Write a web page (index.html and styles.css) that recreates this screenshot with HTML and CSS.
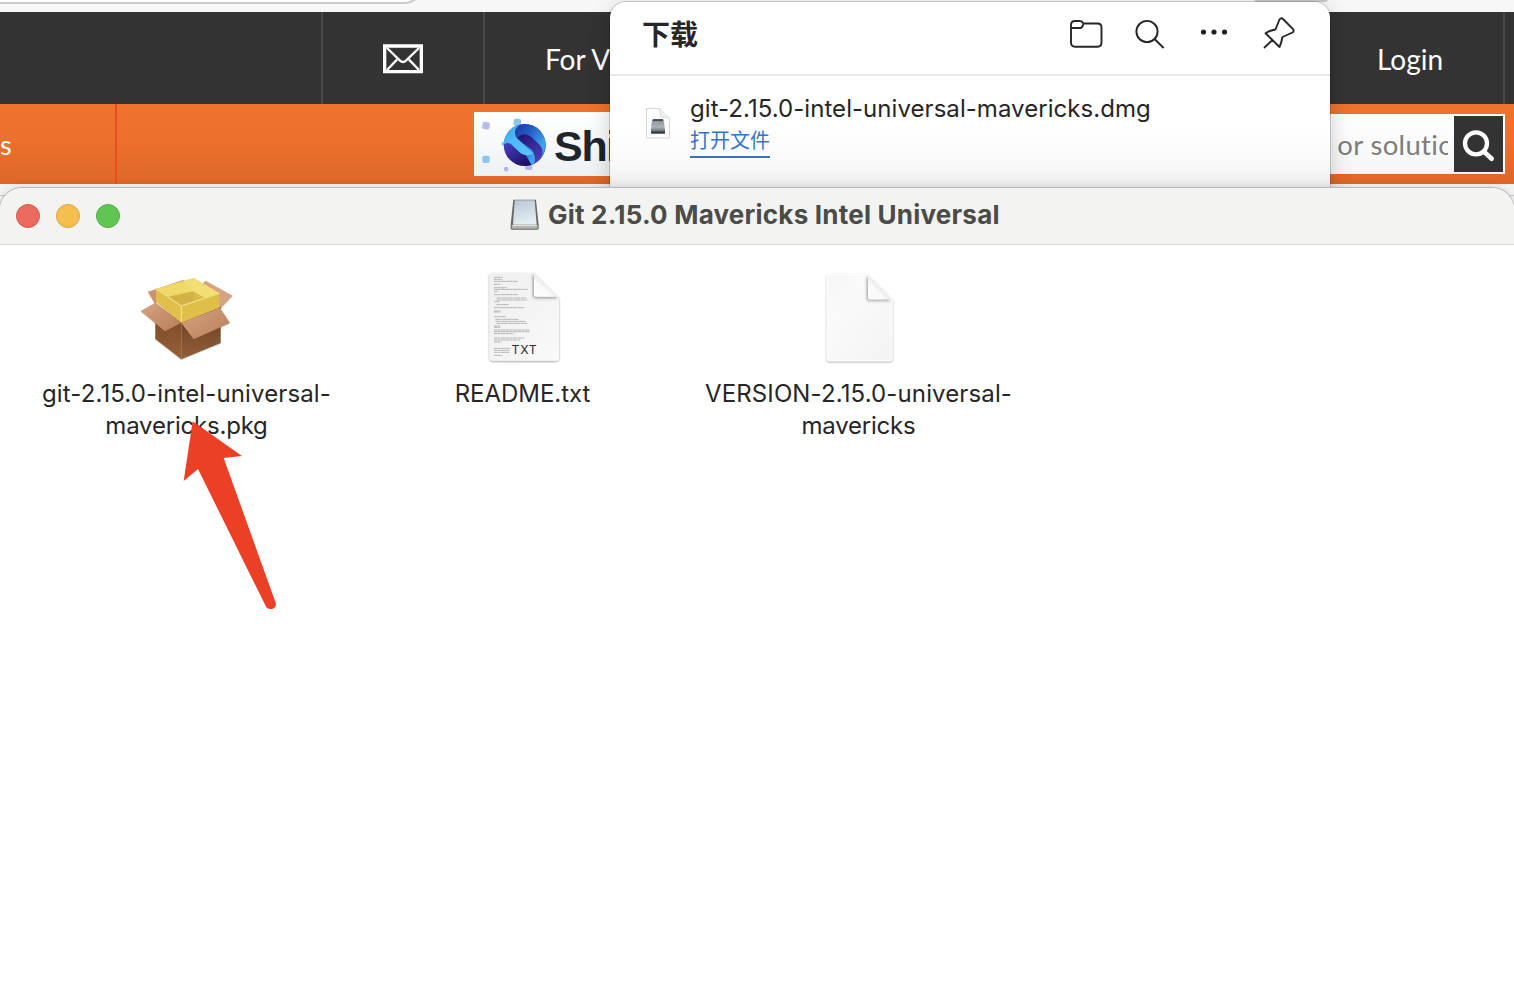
FILE: index.html
```html
<!DOCTYPE html>
<html lang="zh-CN">
<head>
<meta charset="utf-8">
<title>下载</title>
<link rel="stylesheet" href="styles.css">
</head>
<body>
<div class="desktop">
  <div class="browser">
    <div class="chrome"><div class="address"></div><div class="tool"></div></div>
    <nav class="topnav">
      <div class="nav-blank"></div>
      <div class="nav-mail">
        <svg width="40" height="30" viewBox="0 0 120 90" fill="none" stroke="#fff"><path d="M5 6H115V83H5Z" stroke-width="10"/><path d="M12 12L51 50Q60 58 69 50L108 12M12 78L42 47M108 78L78 47" stroke-width="7"/></svg>
      </div>
      <div class="nav-vendors"><span>For V</span></div>
      <div class="nav-login"><span>Login</span></div>
      <div class="nav-end"></div>
    </nav>
    <div class="subnav">
      <div class="sub-left"><span>s</span></div>
      <div class="banner">
        <svg width="78" height="64" viewBox="0 0 234 192">
          <defs>
            <linearGradient id="sky" x1="0" y1="0" x2="1" y2="1"><stop offset="0" stop-color="#3a9cee"/><stop offset=".4" stop-color="#4cb8f6"/><stop offset="1" stop-color="#5cc4f8"/></linearGradient>
            <linearGradient id="rim" x1="0" y1="0" x2="1" y2="1"><stop offset="0" stop-color="#1a3596"/><stop offset=".35" stop-color="#2360c8"/><stop offset=".7" stop-color="#3fa8f0"/><stop offset="1" stop-color="#3c6ad8"/></linearGradient>
            <linearGradient id="navy" x1="0" y1="0" x2="1" y2="1"><stop offset=".3" stop-color="#4438b4"/><stop offset=".75" stop-color="#1d0f62"/></linearGradient>
            <linearGradient id="violet" x1="0" y1="0" x2=".7" y2="1"><stop offset="0" stop-color="#21126c"/><stop offset="1" stop-color="#4b40bd"/></linearGradient>
            <clipPath id="disc"><circle cx="152" cy="99" r="63"/></clipPath>
          </defs>
          <rect x="25" y="30" width="22" height="22" rx="6" fill="#b7bceb" transform="rotate(10 36 41)"/>
          <rect x="25" y="131" width="22" height="22" rx="6" fill="#8dc5ed"/>
          <rect x="119" y="20" width="22" height="22" rx="6" fill="#8dc5e8" transform="rotate(8 130 31)"/>
          <rect x="153" y="152" width="22" height="22" rx="6" fill="#b4b5e8"/>
          <rect x="90" y="165" width="13" height="13" rx="4" fill="#b5b5e6"/>
          <rect x="83" y="89" width="12" height="12" rx="4" fill="#94cbed"/>
          <g clip-path="url(#disc)">
            <rect x="88" y="35" width="130" height="130" fill="url(#navy)"/>
            <path d="M122 62C122 46 136 35 156 34H218V120C216 140 200 158 176 165L150 120L128 82Z" fill="url(#rim)"/>
            <path d="M130 80C136 66 158 62 172 75L198 100C212 116 206 142 178 164C186 142 184 126 172 112Z" fill="url(#violet)"/>
            <path d="M86 100C84 62 112 36 150 34C126 40 116 60 128 78L178 124C172 132 152 132 140 124L116 101C106 90 90 90 86 106Z" fill="url(#sky)"/>
          </g>
        </svg><span class="banner-name">Shi</span>
      </div>
      <div class="search">
        <div class="search-text"><span>e or solution</span></div>
        <div class="search-btn"><svg width="49" height="56" viewBox="0 0 147 168" fill="none" stroke="#fff" stroke-linecap="round"><circle cx="66" cy="82" r="33" stroke-width="13"/><path d="M91 108L113 128" stroke-width="14"/></svg></div>
      </div>
    </div>
    <div class="page"></div>
  </div>

  <section class="downloads">
    <header class="dl-head">
      <h1>下载</h1>
      <div class="dl-tools">
        <svg width="34" height="30" viewBox="0 0 34 30" fill="none" stroke="#262626" stroke-width="1.9"><path d="M2 6Q2 2 6 2H11Q13 2 14.500 4.500H28.500Q32.500 4.500 32.500 8.500V23.500Q32.500 27.700 28.500 27.700H6Q2 27.700 2 23.500ZM2 9H11Q13.500 9 14.500 4.500"/></svg>
        <svg width="30" height="30" viewBox="0 0 30 30" fill="none" stroke="#262626" stroke-width="1.9"><circle cx="12" cy="12.500" r="10.600"/><path d="M19.500 20L28.700 29"/></svg>
        <svg width="28" height="30" viewBox="0 0 28 30" fill="#202020"><circle cx="3.500" cy="15" r="2.600"/><circle cx="14" cy="15" r="2.600"/><circle cx="24.500" cy="15" r="2.600"/></svg>
        <svg width="32" height="32" viewBox="0 0 32 32" fill="none" stroke="#262626" stroke-width="1.9" stroke-linejoin="round"><path d="M16.500 2.500Q18.200 .500 20 2L30 12.200Q31.500 14 29.500 15.500L19.500 20Q18.500 25.500 16.500 30L2.500 16.300Q7 13.500 12.500 12.500ZM9.500 23L1 31"/></svg>
      </div>
    </header>
    <div class="dl-item">
      <svg width="26" height="34" viewBox="0 0 26 34">
        <defs><linearGradient id="drive" x2="0" y2="1"><stop stop-color="#879197"/><stop offset=".55" stop-color="#aab4b8"/><stop offset="1" stop-color="#444b4e"/></linearGradient></defs>
        <path d="M1.500 1.500H14.500L24.500 11V31H1.500Z" fill="#fdfdfd" stroke="#d5d5d5"/><path d="M14.500 1.500L15.500 10L24.500 11" fill="#eee" stroke="#ddd"/>
        <path d="M7 12.500H18.500L20 22V26.500H6V22Z" fill="url(#drive)"/><path d="M8 13H18" stroke="#333" stroke-width="1.500"/><path d="M6.200 24.500H20V26.500H6.200Z" fill="#343a3c"/>
      </svg>
      <div class="dl-text"><span class="dl-name">git-2.15.0-intel-universal-mavericks.dmg</span><a class="dl-open">打开文件</a></div>
    </div>
  </section>

  <section class="finder">
    <header class="titlebar">
      <div class="lights"><i class="light red"></i><i class="light yellow"></i><i class="light green"></i></div>
      <div class="title">
        <svg width="32" height="34" viewBox="-3 -2 96 102">
          <defs><linearGradient id="disk" x2=".3" y2="1"><stop stop-color="#b8c7d0"/><stop offset="1" stop-color="#e2edf2"/></linearGradient></defs>
          <path d="M10 3H78L86 80V89Q85 93 81 93H6Q2 93 2 89V78Z" fill="#65656a"/><path d="M14 5H74L80 78H9Z" fill="url(#disk)"/><path d="M5 80H83V88Q83 90 80 90H7Q5 90 5 87Z" fill="#b5b2ae"/><path d="M7 81H81" stroke="#e9e9e7" stroke-width="3"/><circle cx="78" cy="86" r="3" fill="#72d85d"/>
        </svg><span>Git 2.15.0 Mavericks Intel Universal</span>
      </div>
    </header>
    <div class="files">
      <div class="file">
        <svg class="icon-box" width="130" height="120" viewBox="0 0 390 360">
          <defs>
            <linearGradient id="flap" x2="1" y2="1"><stop stop-color="#d7a482"/><stop offset="1" stop-color="#b77d57"/></linearGradient>
            <linearGradient id="boxl" x2="0" y2="1"><stop stop-color="#764421"/><stop offset="1" stop-color="#956139"/></linearGradient>
            <linearGradient id="boxr" x2="0" y2="1"><stop stop-color="#67391c"/><stop offset="1" stop-color="#91603a"/></linearGradient>
            <filter id="soft" x="-10%" y="-10%" width="120%" height="120%"><feDropShadow dx="0" dy="2" stdDeviation="2" flood-opacity=".25"/></filter>
          </defs>
          <g filter="url(#soft)">
            <path d="M84 95L190 60L222 98L104 130Z" fill="#c99371"/><path d="M222 90L257 62L338 107L302 145Z" fill="#d5a382"/>
            <path d="M106 130L184 187V298L106 237Z" fill="url(#boxl)"/><path d="M184 187L302 141V249L184 298Z" fill="url(#boxr)"/>
            <path d="M108 86L184 138V188L108 126Z" fill="#e0c04c"/><path d="M184 138L298 100V143L184 188Z" fill="#dfbf48"/>
            <path d="M108 86L222 54L298 100L184 138Z" fill="#f0d969"/>
            <path d="M143 110L220 94L254 114L184 137Z" fill="#d9bb4b"/><path d="M145 111L220 95V125L184 137Z" fill="#d1b245"/>
            <path d="M190 62L222 54L298 100L253 112L220 94Z" fill="#f4df7b" opacity=".75"/>
            <path d="M108 86L184 138L298 100M184 138V187" fill="none" stroke="#f0dc79" stroke-width="4"/>
            <path d="M106 128L184 188L135 214L62 153Z" fill="url(#flap)"/><path d="M184 188L300 143L330 189L221 238Z" fill="url(#flap)"/>
          </g>
        </svg>
        <p>git-2.15.0-intel-universal-<br><span class="tight">mavericks.pkg</span></p>
      </div>
      <div class="file">
        <svg class="icon-doc" width="110" height="120" viewBox="0 0 330 360">
          <defs>
            <linearGradient id="paper" x2="1" y2="1"><stop stop-color="#efefef"/><stop offset="1" stop-color="#f9f9f9"/></linearGradient>
            <linearGradient id="plain" x2="1" y2="1"><stop stop-color="#f6f6f6"/><stop offset=".3" stop-color="#fafafa"/><stop offset="1" stop-color="#f3f3f3"/></linearGradient>
            <linearGradient id="curl" x1="0" y1="1" x2="1" y2="0"><stop stop-color="#fff"/><stop offset=".35" stop-color="#fafafa"/><stop offset=".6" stop-color="#dedede"/></linearGradient>
            <filter id="lift" x="-15%" y="-15%" width="130%" height="130%"><feDropShadow dx="0" dy="3" stdDeviation="3" flood-opacity=".38"/></filter>
            <filter id="fold" x="-40%" y="-40%" width="180%" height="180%"><feDropShadow dx="-3" dy="4" stdDeviation="5" flood-opacity=".4"/></filter>
            <clipPath id="page"><path d="M68 39H192L267 114V302H58V49Q58 39 68 39Z"/></clipPath>
          </defs>
          <path d="M68 39H192L267 114V292Q267 302 257 302H68Q58 302 58 292V49Q58 39 68 39Z" fill="url(#paper)" filter="url(#lift)"/>
          <g clip-path="url(#page)"><path d="M192 38L267 110H200Q192 110 192 102Z" fill="url(#curl)" filter="url(#fold)"/></g>
          <g stroke="#777" stroke-width="2.5" opacity=".6" stroke-dasharray="11 1 7 1 15 1">
            <path d="M72 52H98"/><path d="M72 58H97"/><path d="M72 64H144"/><path d="M72 73H92"/><path d="M72 83H110"/><path d="M72 88H173"/><path d="M72 94H84"/><path d="M72 104H143"/><path d="M79 114H169"/><path d="M79 120H172"/><path d="M72 125H88"/><path d="M79 134H117"/><path d="M72 143H162"/><path d="M72 153H93"/><path d="M72 156H91"/>
            <path d="M72 170H107"/><path d="M76 178H146"/><path d="M76 184H168"/><path d="M80 190H172"/><path d="M72 198H92"/><path d="M72 202H90"/><path d="M72 210H180"/><path d="M72 215H178"/><path d="M72 221H133"/><path d="M72 234H163"/><path d="M72 240H151"/><path d="M72 246H94"/><path d="M72 265H122"/><path d="M72 271H120"/><path d="M72 277H118"/><path d="M72 286H97"/>
          </g>
          <text x="163.500" y="282" text-anchor="middle" class="badge">TXT</text>
        </svg>
        <p><span class="readme">README.txt</span></p>
      </div>
      <div class="file">
        <svg class="icon-doc blank" width="100" height="120" viewBox="0 0 300 360">
          <defs><clipPath id="blank"><path d="M52 44H174L246 116V302H52Z"/></clipPath></defs>
          <path d="M60 44H174L246 116V296Q246 302 240 302H58Q52 302 52 296V52Q52 44 60 44Z" fill="url(#plain)" stroke="#fff" stroke-width="3" filter="url(#lift)"/>
          <g clip-path="url(#blank)"><path d="M174 44L246 118H182Q174 118 174 110Z" fill="url(#curl)" filter="url(#fold)"/></g>
        </svg>
        <p>VERSION-2.15.0-universal-<br><span class="tight">mavericks</span></p>
      </div>
    </div>
  </section>
  <svg class="arrow" width="100" height="200" viewBox="0 0 300 600"><path fill="#eb4026" d="M38 34L186 138L131 144L287 578Q290 592 279 596Q265 600 259 592L54 177L11 213Z"/></svg>
</div>
</body>
</html>
```
FILE: styles.css
```css
* { box-sizing: border-box; }
body { margin: 0; font-family: Inter, "Noto Sans CJK SC", sans-serif; color: #262626; }
svg { display: block; flex: none; }
.desktop { position: relative; width: 1514px; height: 1004px; overflow: hidden; background: #f4f4f4; }
.browser { display: flex; flex-direction: column; font-family: Lato, sans-serif; font-variant-ligatures: none; }
.chrome { display: flex; justify-content: space-between; height: 12px; background: #f7f7f7; overflow: hidden; }
.address { width: 454px; height: 40px; margin: -36px 0 0 -30px; border: 2px solid #cbcbcb; border-radius: 20px; background: #fff; }
.tool { width: 74px; height: 6px; margin: -4px 186px 0 0; border-radius: 3px; background: #c9c9c9; }
.topnav { display: flex; height: 92px; background: #333; color: #fff; font-size: 28px; }
.topnav > div { display: flex; align-items: center; border-right: 2px solid #484848; }
.nav-blank { width: 323px; }
.nav-mail { width: 162px; justify-content: center; padding-top: 2px; }
.nav-vendors { width: 830px; padding: 1px 0 0 60px; }
.nav-login { width: 190px; padding: 1px 0 0 62px; }
.topnav .nav-end { flex: 1; border: 0; }
.subnav { display: flex; align-items: center; height: 80px; background: linear-gradient(#ef722d, #ec6f2c 50%, #dd6728); }
.sub-left { display: flex; align-items: center; width: 117px; height: 80px; border-right: 2px solid #e84d25; color: #fff; font-size: 27px; }
.banner { display: flex; align-items: center; width: 400px; height: 64px; margin-left: 357px; background: linear-gradient(#fff, #edf1f3); }
.banner-name { margin: 4px 0 0 2px; color: #20242b; font: bold 43px "Liberation Sans", sans-serif; letter-spacing: -1.300px; }
.search { display: flex; align-items: center; width: 385px; height: 60px; margin-left: 246px; padding-right: 2px; background: linear-gradient(#fff, #f5f5f5); }
.search-text { display: flex; flex: 1; height: 60px; align-items: center; padding: 1px 0 0 195px; overflow: hidden; margin-right: 6px; color: #7d7d7d; font-size: 27.500px; letter-spacing: .35px; white-space: nowrap; }
.search-btn { width: 49px; height: 56px; background: #333; }
.page { height: 12px; border-bottom: 1px solid #c8c8c8; background: #f3f3f3; }
.downloads { position: absolute; left: 610px; top: 2px; width: 720px; height: 210px; border-radius: 16px 16px 0 0; background: linear-gradient(#fff 60%, #f9f9f9 78%, #ececec 88%); box-shadow: 0 0 0 1px rgba(0,0,0,.16), 0 6px 22px rgba(0,0,0,.2); }
.dl-head { display: flex; justify-content: space-between; height: 74px; padding: 0 35px 0 32px; border-bottom: 2px solid #e8e8e8; }
.dl-head h1 { margin: 11px 0 0; font: bold 28px/40px "Noto Sans CJK SC", sans-serif; }
.dl-tools { display: flex; gap: 35px; padding-top: 15px; }
.dl-tools svg:nth-child(1) { margin-top: 2px; margin-right: -3px; }
.dl-tools svg:nth-child(2) { margin-top: 2px; }
.dl-item { display: flex; gap: 19px; padding: 15px 0 0 35px; }
.dl-item > svg { margin-top: 16px; }
.dl-text { display: flex; flex-direction: column; align-items: flex-start; }
.dl-name { font-size: 24px; line-height: 36px; letter-spacing: .050px; }
.dl-open { height: 31px; border-bottom: 2px solid #3375cc; color: #3375cc; font: 20px/26px "Noto Sans CJK SC", sans-serif; }
.finder { position: absolute; left: 0; top: 188px; width: 1514px; height: 816px; border-radius: 22px 22px 0 0; background: #fff; box-shadow: 0 0 0 1px #b9b9b9, 0 0 10px rgba(0,0,0,.15); }
.titlebar { display: grid; grid-template-columns: 509px 1fr; align-items: center; height: 57px; border-bottom: 1px solid #d9d9d7; border-radius: 22px 22px 0 0; background: #f3f3f1; }
.lights { display: flex; gap: 16px; padding-left: 16px; }
.light { width: 24px; height: 24px; border: 1px solid; border-radius: 50%; }
.red { background: #ec6b5f; border-color: #d75549; }
.yellow { background: #f5bf4f; border-color: #dba33c; }
.green { background: #61c554; border-color: #50ad42; }
.title { display: flex; align-items: center; gap: 7px; margin-top: -3px; color: #4b4b49; font-size: 26px; font-weight: 700; letter-spacing: .220px; white-space: nowrap; }
.files { display: grid; grid-template-columns: repeat(3, 336px); padding: 15px 0 0 18.500px; }
.file { display: flex; flex-direction: column; align-items: center; }
.icon-box { margin-left: -4px; }
.icon-doc { margin-left: 5px; }
.blank { margin-left: 3px; }
.file p { margin: -2px 0 0; font-size: 24px; line-height: 32px; text-align: center; white-space: nowrap; letter-spacing: .130px; }
.file .tight { letter-spacing: -.200px; }
.file .readme { letter-spacing: -.050px; }
.badge { font: 37px Inter, sans-serif; fill: #303030; letter-spacing: 2px; }
.arrow { position: absolute; left: 180px; top: 410px; }
```
